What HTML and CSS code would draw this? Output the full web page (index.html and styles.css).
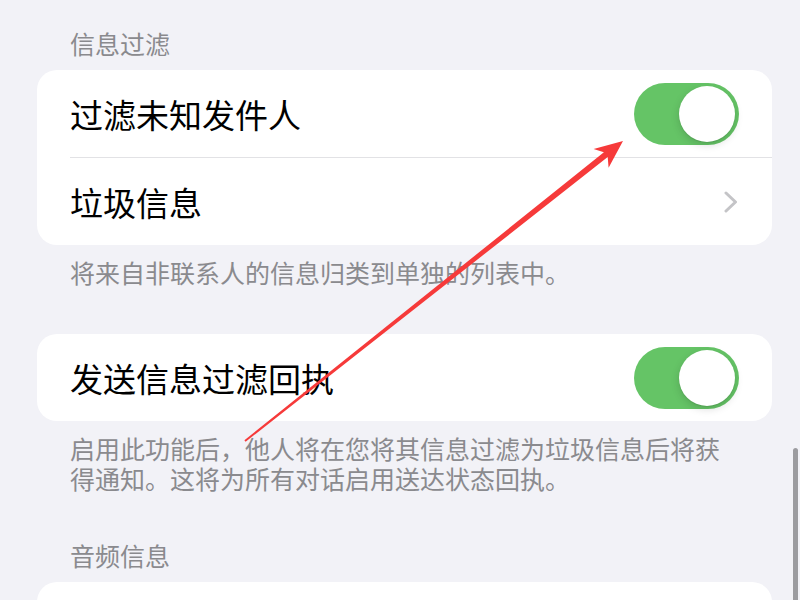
FILE: index.html
```html
<!DOCTYPE html>
<html lang="zh-CN">
<head>
    <meta charset="UTF-8">
    <meta name="viewport" content="width=device-width,initial-scale=1.0">
    <title>信息设置</title>
    <link rel="stylesheet" href="styles.css">
</head>
<body>
    <div class="st_page">
        <div class="st_group-head">信息过滤</div>
        <div class="st_group">
            <div class="st_row">
                <div class="st_row-inner">
                    <span class="st_row-text">过滤未知发件人</span>
                    <i class="st_switch st_switch-on"></i>
                </div>
            </div>
            <div class="st_row">
                <div class="st_row-inner">
                    <span class="st_row-text">垃圾信息</span>
                    <svg class="st_chevron" width="14" height="22" viewBox="0 0 14 22"><path d="M2 2 L11.5 11 L2 20" fill="none" stroke="#c4c4c7" stroke-width="3" stroke-linecap="round" stroke-linejoin="round"/></svg>
                </div>
            </div>
        </div>
        <div class="st_group-foot">将来自非联系人的信息归类到单独的列表中。</div>

        <div class="st_group st_group-gap">
            <div class="st_row">
                <div class="st_row-inner">
                    <span class="st_row-text">发送信息过滤回执</span>
                    <i class="st_switch st_switch-on"></i>
                </div>
            </div>
        </div>
        <div class="st_group-foot">启用此功能后，他人将在您将其信息过滤为垃圾信息后将获得通知。这将为所有对话启用送达状态回执。</div>

        <div class="st_group-head st_group-gap">音频信息</div>
        <div class="st_group">
            <div class="st_row">
                <div class="st_row-inner"></div>
            </div>
        </div>
    </div>

    <!-- annotation arrow -->
    <svg class="st_arrow" width="800" height="600" viewBox="0 0 800 600">
        <polygon points="244.4,440.2 603.9,152.3 593.6,149 623,141 608.6,167.8 607.7,157.1 245.6,441.8" fill="#f63a3a"/>
    </svg>
    <div class="st_scrollbar"></div>
</body>
</html>
```
FILE: styles.css
```css
html, body{ margin: 0; padding: 0; height: 100%; overflow: hidden;}
body{ background: #f2f2f7; font-family: "Noto Sans CJK SC", "Noto Sans", sans-serif; -webkit-font-smoothing: antialiased; color: #000;}

.st_page{ padding: 28px 28px 0 37px;}

.st_group-head{ padding-left: 33px; font-size: 25px; line-height: 30px; color: #8a8a8e; margin-bottom: 12px;}
.st_group-foot{ padding: 0 40px 0 33px; margin-top: 12px; font-size: 25px; line-height: 30px; color: #8a8a8e;}
.st_group-gap{ margin-top: 47px;}

.st_group{ background: #fff; border-radius: 20px; overflow: hidden;}
.st_row{ padding-left: 33px;}
.st_row-inner{ display: flex; align-items: center; justify-content: space-between; height: 87px; padding-right: 33px;}
.st_row + .st_row .st_row-inner{ border-top: 1px solid #e2e2e5;}
.st_row-text{ font-size: 33px; line-height: 40px;}

.st_switch{ display: block; position: relative; width: 105px; height: 62px; border-radius: 31px; background: #e9e9eb;}
.st_switch:after{ content: ""; position: absolute; top: 3px; left: 4px; width: 56px; height: 56px; border-radius: 50%; background: #fff; box-shadow: 0 3px 8px rgba(0,0,0,0.15), 0 1px 1px rgba(0,0,0,0.08);}
.st_switch-on{ background: #65c466;}
.st_switch-on:after{ left: auto; right: 4px;}

.st_chevron{ display: block; margin-right: 1px;}

.st_arrow{ position: absolute; left: 0; top: 0; pointer-events: none;}
.st_scrollbar{ position: absolute; right: 2px; top: 448px; width: 5px; height: 160px; border-radius: 3px; background: #9c9ca0;}
```
